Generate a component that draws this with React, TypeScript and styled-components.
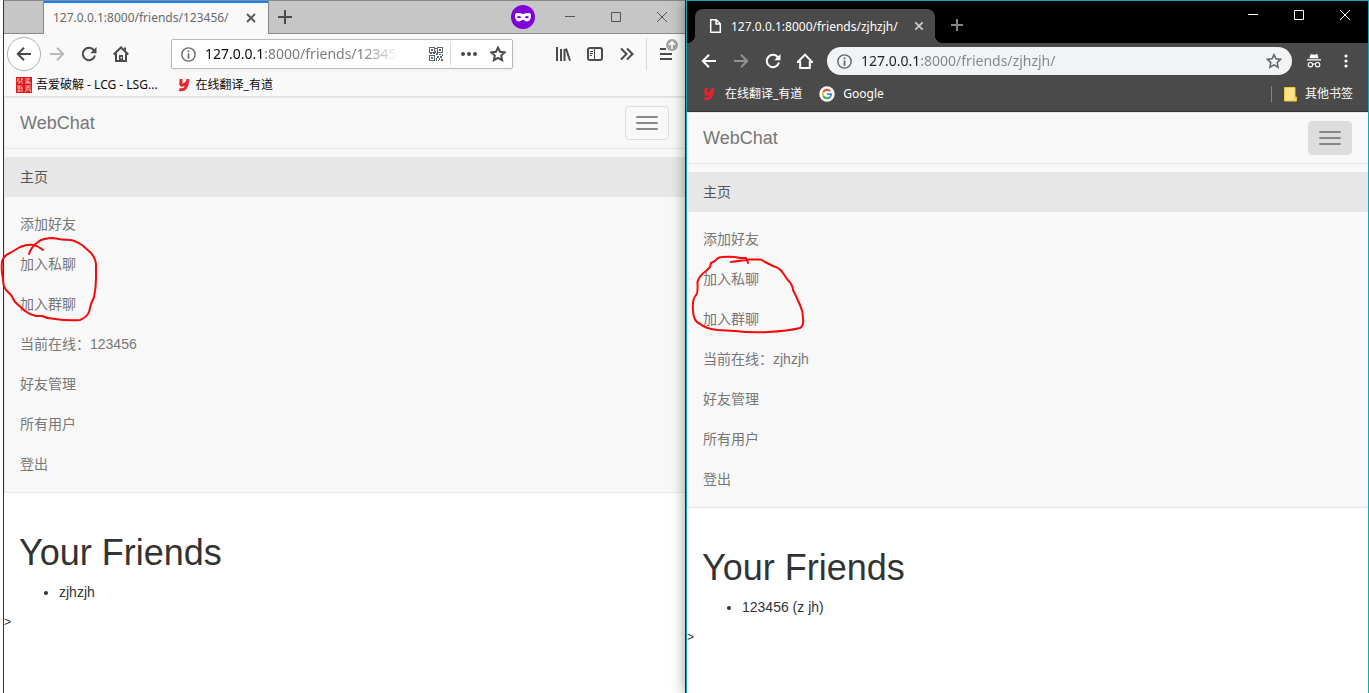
import React from 'react';
import styled, { createGlobalStyle, css } from 'styled-components';

const uiFont = '"Noto Sans", "Noto Sans CJK SC", sans-serif';
const pageFont = '"Liberation Sans", "Noto Sans CJK SC", sans-serif';

const GlobalStyle = createGlobalStyle`
  *, *::before, *::after { box-sizing: border-box; }
  body { margin: 0; background: #fff; font-family: ${pageFont}; }
  button { padding: 0; border: 0; background: none; font: inherit; color: inherit; cursor: pointer; }
  svg { display: block; flex: none; }
`;

const Desktop = styled.main`
  display: grid;
  grid-template-columns: minmax(0, 1fr) minmax(0, 1fr);
  min-height: 100vh;
  padding-left: 3px;
  overflow: hidden;
`;

const BrowserWindow = styled.section<{ $dark?: boolean }>`
  position: relative;
  display: flex;
  flex-direction: column;
  min-width: 0;
  background: #fff;
  ${({ $dark }) =>
    $dark
      ? css`
          border: 1px solid #17a2be;
          border-bottom: 0;
          z-index: 1;
          box-shadow: 0 0 14px rgba(0, 0, 0, 0.45);
        `
      : css`
          border: 1px solid #333;
          border-top-color: #888;
          border-bottom: 0;
        `}
`;

const TabStrip = styled.header<{ $dark?: boolean }>`
  display: flex;
  font-family: ${uiFont};
  ${({ $dark }) =>
    $dark
      ? css`
          height: 42px;
          padding: 8px 0 0 8px;
          background: #000;
        `
      : css`
          height: 33px;
          padding-left: 39px;
          background: #c6c6c6;
          border-bottom: 1px solid #8a8a8a;
        `}
`;

const Tab = styled.div<{ $dark?: boolean }>`
  display: flex;
  align-items: center;
  font-size: 12px;
  white-space: nowrap;
  ${({ $dark }) =>
    $dark
      ? css`
          position: relative;
          width: 240px;
          height: 34px;
          padding: 0 8px 0 12px;
          gap: 8px;
          color: #fff;
          background: #4a4a4a;
          border-radius: 8px 8px 0 0;
          &::before, &::after {
            content: '';
            position: absolute;
            bottom: 0;
            width: 8px;
            height: 8px;
          }
          &::before {
            left: -8px;
            background: radial-gradient(circle at 0 0, transparent 8px, #4a4a4a 8px);
          }
          &::after {
            right: -8px;
            background: radial-gradient(circle at 100% 0, transparent 8px, #4a4a4a 8px);
          }
        `
      : css`
          width: 226px;
          height: 33px;
          padding: 0 9px;
          color: #6a6a6a;
          background: #f9f9fa;
          border: solid #8a8a8a;
          border-width: 0 1px;
          box-shadow: inset 0 2px #0a84ff;
        `}
`;

const TabTitle = styled.span`
  flex: 1;
  min-width: 0;
  overflow: hidden;
`;

const IconButton = styled.button<{ $w: number; $h?: number; $round?: boolean }>`
  position: relative;
  display: flex;
  flex: none;
  align-items: center;
  justify-content: center;
  width: ${({ $w }) => $w}px;
  height: ${({ $h }) => $h ?? 32}px;
  ${({ $round }) =>
    $round &&
    css`
      && {
        background: #fff;
        border: 1px solid #b1b1b3;
      }
      border-radius: 50%;
    `}
`;

const WindowControls = styled.div`
  display: flex;
  flex: none;
  margin-left: auto;
`;

const ChromeControls = styled(WindowControls)`
  margin-top: -8px;
`;

const FirefoxMenu = styled.div`
  display: flex;
  margin-left: 3px;
  padding-left: 3px;
  border-left: 1px solid #d7d7db;
`;

const PrivateBadge = styled.span`
  align-self: center;
  margin-right: 12px;
`;

const Toolbar = styled.nav<{ $dark?: boolean }>`
  display: flex;
  align-items: center;
  font-family: ${uiFont};
  ${({ $dark }) =>
    $dark
      ? css`
          height: 36px;
          padding: 0 6px;
          background: #4a4a4a;
        `
      : css`
          height: 40px;
          padding: 0 3px;
          background: #f9f9fa;
        `}
`;

const AddressBar = styled.form<{ $dark?: boolean }>`
  display: flex;
  align-items: center;
  flex: 1;
  min-width: 0;
  gap: 7px;
  ${({ $dark }) =>
    $dark
      ? css`
          height: 28px;
          margin: 0 6px;
          padding: 0 6px 0 10px;
          background: #f1f3f4;
          border-radius: 14px;
        `
      : css`
          height: 30px;
          margin: 0 34px;
          padding: 0 3px 0 9px;
          background: #fff;
          border: 1px solid #b9b9bb;
          border-radius: 2px;
          box-shadow: 0 1px 3px rgba(0, 0, 0, 0.06);
        `}
`;

const AddressInput = styled.input<{ $shade: string }>`
  flex: 1;
  min-width: 0;
  height: 24px;
  padding: 0 0 2px 2px;
  border: 0;
  outline: 0;
  font-family: ${uiFont};
  font-size: 14px;
  color: transparent;
  background: ${({ $shade }) => $shade};
  background-clip: text;
  -webkit-background-clip: text;
`;

const Divider = styled.span<{ $h: number; $color: string }>`
  flex: none;
  width: 1px;
  height: ${({ $h }) => $h}px;
  background: ${({ $color }) => $color};
`;

const Bookmarks = styled.nav<{ $dark?: boolean }>`
  display: flex;
  align-items: center;
  font-family: ${uiFont};
  font-size: 12px;
  line-height: 16px;
  ${({ $dark }) =>
    $dark
      ? css`
          height: 33px;
          padding: 0 15px 2px 16px;
          gap: 17px;
          color: #fff;
          background: #4a4a4a;
          border-bottom: 1px solid #333;
        `
      : css`
          height: 23px;
          padding: 0 12px;
          gap: 20px;
          color: #0c0c0d;
          background: #f9f9fa;
          border-bottom: 1px solid #e0e0e1;
        `}
`;

const Bookmark = styled.a<{ $gap: number }>`
  display: flex;
  align-items: center;
  gap: ${({ $gap }) => $gap}px;
  color: inherit;
  text-decoration: none;
  white-space: nowrap;
`;

const BookmarkEnd = styled.div`
  display: flex;
  align-items: center;
  gap: 12px;
  margin-left: auto;
`;

const Navbar = styled.nav`
  background: #f8f8f8;
  border: 1px solid #e7e7e7;
  border-right: 0;
  font-size: 14px;
  line-height: 20px;
`;

const NavHeader = styled.div`
  display: flex;
  align-items: center;
  justify-content: space-between;
  height: 50px;
  padding: 0 16px 0 15px;
`;

const Brand = styled.a`
  font-size: 18px;
  color: #777;
  text-decoration: none;
`;

const Toggle = styled.button<{ $active?: boolean }>`
  display: flex;
  flex-direction: column;
  gap: 4px;
  && {
    padding: 9px 10px;
    border: 1px solid #ddd;
    background: ${({ $active }) => ($active ? '#ddd' : 'transparent')};
  }
  border-radius: 4px;
`;

const ToggleBar = styled.span`
  width: 22px;
  height: 2px;
  border-radius: 1px;
  background: #888;
`;

const Menu = styled.ul`
  position: relative;
  list-style: none;
  margin: 0;
  padding: 8px 0;
  border-top: 1px solid #e7e7e7;
`;

const MenuItem = styled.li<{ $active?: boolean }>`
  ${({ $active }) => $active && 'margin-bottom: 7px; background: #e7e7e7;'}
  a {
    display: block;
    padding: 10px 15px;
    color: ${({ $active }) => ($active ? '#555' : '#777')};
    text-decoration: none;
  }
`;

const Markup = styled.svg`
  position: absolute;
  left: 0;
  top: 0;
  overflow: visible;
  pointer-events: none;
  fill: none;
  stroke: #f80808;
  stroke-width: 2;
  stroke-linejoin: round;
  stroke-linecap: round;
`;

const Content = styled.article`
  padding: 20px 15px 0;
  margin-top: 20px;
  color: #333;
`;

const Title = styled.h1`
  margin: 0 0 9px;
  font-size: 36px;
  font-weight: normal;
  line-height: 40px;
`;

const FriendList = styled.ul`
  margin: 0 0 10px;
  padding-left: 40px;
  font-size: 14px;
  line-height: 20px;
`;

const Tail = styled.p`
  margin: 0;
  font-size: 12px;
  line-height: 20px;
  color: #333;
`;

type IconProps = { d: string; size?: number; color?: string; width?: number; fill?: string };

const Icon = ({ d, size = 16, color = '#4a4a4f', width = 2, fill = 'none' }: IconProps) => (
  <svg width={size} height={size} viewBox={`0 0 ${size} ${size}`} fill={fill} stroke={color} strokeWidth={width} aria-hidden="true">
    <path d={d} />
  </svg>
);

const backPath = 'M15 8H2M8 1.8L1.8 8L8 14.2';
const forwardPath = 'M1 8h13M8 1.8L14.2 8L8 14.2';
const starPath = 'M8 1.6l2 4.2 4.6.6-3.4 3.2.9 4.6L8 11.9l-4.1 2.3.9-4.6L1.4 6.4 6 5.8z';

const Reload = ({ color }: { color: string }) => (
  <svg width="16" height="16" viewBox="0 0 16 16" aria-hidden="true">
    <path d="M13.2 4.6A6.2 6.2 0 1 0 14 9.6" fill="none" stroke={color} strokeWidth="2" />
    <path d="M15.5 1v6.2H9.3z" fill={color} />
  </svg>
);

const Info = ({ size, color }: { size: number; color: string }) => (
  <svg width={size} height={size} viewBox="0 0 14 14" aria-hidden="true">
    <circle cx="7" cy="7" r="6.2" fill="none" stroke={color} strokeWidth="1.3" />
    <path d="M6.2 3.2h1.6v1.6H6.2zM6.2 6h1.6v5H6.2z" fill={color} />
  </svg>
);

const Youdao = () => (
  <svg width="12" height="14" viewBox="0 0 12 14" aria-hidden="true">
    <path d="M3.2 1L2.700 5.500q-.1 1.900 1.800 1.600Q7.400 6.700 8.600 4M10 1L9.200 5.500Q8.200 10 6 11.200Q4.500 12 1.200 11.800" fill="none" stroke="#e8232a" strokeWidth="3" />
  </svg>
);

const QrCode = () => (
  <svg width="14" height="14" viewBox="0 0 14 14" fill="#5c6670" aria-hidden="true">
    <path
      fillRule="evenodd"
      d="M0 0h6v6H0zM1 1v4h4V1zM8 0h6v6H8zM9 1v4h4V1zM0 8h6v6H0zM1 9v4h4V9zM2 2h2v2H2zM10 2h2v2h-2zM2 10h2v2H2zM6 1h2v1H6zM6 4h1v2H6zM7 6h2v2H7zM1 6h2v1H1zM4 6h2v1H4zM10 7h2v1h-2zM13 7h1v2h-1zM8 9h2v2H8zM11 9h2v2h-2zM7 11h1v3H7zM10 11h1v2h-1zM9 13h1v1H9zM12 12h2v2h-2z"
    />
  </svg>
);

const SealIcon = () => (
  <svg width="16" height="16" viewBox="0 0 16 16" aria-hidden="true">
    <path d="M0 0h16v16H0z" fill="#e0161c" />
    <path
      d="M1 2h3M2 2L1 5M2 4h2v2H2M5 2h2M6 1v3M5 4l2 3M9 2h5M10 3v2h4M9 6h6M12 1v5M1 9h5M3 9v6M1 11h5M1 14h6M6 10v3M9 9h6M9 11h6M12 9v2M10 13h4M9 15l2-3M14 12l1 3"
      fill="none"
      stroke="#ffd0ce"
      strokeWidth="0.8"
    />
  </svg>
);

const GoogleIcon = () => (
  <svg width="16" height="16" viewBox="0 0 16 16" aria-hidden="true">
    <circle cx="8" cy="8" r="7.700" fill="#fff" />
    <g fill="none" strokeWidth="1.900">
      <path d="M11.100 5A4.200 4.200 0 0 0 4.300 6.100" stroke="#ea4335" />
      <path d="M4.300 6.100a4.200 4.200 0 0 0 0 3.900" stroke="#fbbc05" />
      <path d="M4.300 10a4.200 4.200 0 0 0 6.600 1.200" stroke="#34a853" />
      <path d="M10.800 11.200A4.200 4.200 0 0 0 12.200 8.100H8" stroke="#4285f4" />
    </g>
  </svg>
);

const FolderIcon = () => (
  <svg width="13" height="15" viewBox="0 0 13 15" aria-hidden="true">
    <path d="M.5.5h10.500v9.500h1.500v4H.500z" fill="#ffe48f" stroke="#f0c63c" />
    <path d="M10.500 10v4" stroke="#f0c63c" />
  </svg>
);

const MaskIcon = () => (
  <svg width="24" height="24" viewBox="0 0 24 24" role="img" aria-label="Private browsing">
    <circle cx="12" cy="12" r="12" fill="#8000d7" />
    <path
      fillRule="evenodd"
      fill="#fff"
      d="M4 9.500C4.500 7.600 8.500 7.600 12 9c3.500-1.400 7.500-1.400 8 .5.300 4-1.300 7-3.900 7-2 0-2.700-1.800-4.100-1.800S9.900 16.500 7.900 16.500C5.300 16.500 3.700 13.500 4 9.500zM6 12c.9 1.700 3.400 1.700 4.300.2-1.200-1.500-3.200-1.600-4.300-.2zM13.700 12.200c.9 1.500 3.400 1.500 4.300-.2-1.100-1.400-3.100-1.300-4.300.2z"
    />
  </svg>
);

const IncognitoIcon = () => (
  <svg width="14" height="14" viewBox="0 0 14 14" aria-hidden="true">
    <path d="M3.600 0L7 .8 10.400 0l1.200 4.200H2.400zM0 5.200h14v1.200H0z" fill="#fff" />
    <g fill="none" stroke="#fff" strokeWidth="1.100">
      <circle cx="3.400" cy="10.700" r="2.200" />
      <circle cx="10.600" cy="10.700" r="2.200" />
      <path d="M5.500 10.300q1.500-.8 3 0" />
    </g>
  </svg>
);

const MenuUpdateIcon = () => (
  <svg width="24" height="32" viewBox="0 0 24 32" aria-hidden="true">
    <path d="M6 11h6M6 16h12M6 21h12" stroke="#4a4a4f" strokeWidth="2" />
    <circle cx="18" cy="7" r="6" fill="#a3a3a3" />
    <path d="M18 11V4M15 7l3-3 3 3" fill="none" stroke="#fff" strokeWidth="1.600" />
  </svg>
);

const Controls = ({ color, height }: { color: string; height: number }) => (
  <>
    <IconButton $w={46} $h={height} aria-label="Minimize"><Icon size={12} color={color} width={1} d="M1 5.500h10" /></IconButton>
    <IconButton $w={46} $h={height} aria-label="Maximize"><Icon size={12} color={color} width={1} d="M1.500 1.500h9v9h-9z" /></IconButton>
    <IconButton $w={46} $h={height} aria-label="Close window"><Icon size={12} color={color} width={1} d="M1 1l10 10M11 1L1 11" /></IconButton>
  </>
);

type SiteProps = { user: string; friend: string; expanded?: boolean; markup: string; shift: string };

const Site = ({ user, friend, expanded, markup, shift }: SiteProps) => (
  <>
    <Navbar>
      <NavHeader>
        <Brand href="#">WebChat</Brand>
        <Toggle $active={expanded} aria-label="Toggle navigation">
          <ToggleBar /><ToggleBar /><ToggleBar />
        </Toggle>
      </NavHeader>
      <Menu>
        <MenuItem $active><a href="#">主页</a></MenuItem>
        {['添加好友', '加入私聊', '加入群聊', `当前在线：${user}`, '好友管理', '所有用户', '登出'].map((label) => (
          <MenuItem key={label}><a href="#">{label}</a></MenuItem>
        ))}
        <Markup as="svg" width="120" height="180" aria-hidden="true">
          <path transform={shift} d={markup} />
        </Markup>
      </Menu>
    </Navbar>
    <Content>
      <Title>Your Friends</Title>
      <FriendList><li>{friend}</li></FriendList>
    </Content>
    <Tail>&gt;</Tail>
  </>
);

const leftMarkup =
  'M43 250L37 246Q30 243 20 247L10 253Q3 256 2 262Q1 270 3 279Q3 286 6 290L11 295L15 302L25 311Q30 315 36 316L42 316Q48 319 55 319Q68 321 80 320Q87 317 89 312L91 304L94 297Q96 288 96 278L96 266Q96 258 90 252L82 245Q74 240 70 240Q62 240 53 238Q43 238 38 242Q31 247 29 254';
const rightMarkup =
  'M731 262L738 261L750 259.500H761L765 262L773 266Q780 268 783 273L787 279Q793 285 793 290L796 296L800 305Q803 311 803 318Q804 326 800 328Q788 331 768 332Q750 333 735 331L718 330Q706 329 700 324Q693 321 693 310Q692 300 696 295Q698 294 697.500 282Q699 276 706 271L710 267L711 263L715 261Q718 257 722 257Q733 256 740 258H746L748 263';

const hold = (e: React.FormEvent) => e.preventDefault();

const Firefox = () => (
  <BrowserWindow aria-label="Firefox">
    <TabStrip>
      <Tab>
        <TabTitle>127.0.0.1:8000/friends/123456/</TabTitle>
        <IconButton $w={16} aria-label="Close tab"><Icon size={10} width={2} color="#5c5c5c" d="M1 1l8 8M9 1L1 9" /></IconButton>
      </Tab>
      <IconButton $w={32} aria-label="New tab"><Icon size={14} d="M7 0v14M0 7h14" /></IconButton>
      <WindowControls>
        <PrivateBadge><MaskIcon /></PrivateBadge>
        <Controls color="#555" height={32} />
      </WindowControls>
    </TabStrip>
    <Toolbar>
      <IconButton $w={34} $h={34} $round aria-label="Back"><Icon d={backPath} /></IconButton>
      <IconButton $w={32} aria-label="Forward"><Icon color="#b9b9bb" d={forwardPath} /></IconButton>
      <IconButton $w={32} aria-label="Reload"><Reload color="#4a4a4f" /></IconButton>
      <IconButton $w={32} aria-label="Home">
        <svg width="16" height="16" viewBox="0 0 16 16" aria-hidden="true">
          <path d="M.700 8.500L8 1.500l7.300 7M3 7.500V15h10V7.500" fill="none" stroke="#4a4a4f" strokeWidth="2" />
          <path d="M6 9h4v6H6zM11 1.500h2V5l-2-2z" fill="#4a4a4f" />
          <path d="M7.500 11h1.500v1.500H7.500z" fill="#f9f9fa" />
        </svg>
      </IconButton>
      <AddressBar onSubmit={hold}>
        <Info size={15} color="#6a6a6e" />
        <AddressInput
          aria-label="Address"
          defaultValue="127.0.0.1:8000/friends/123456/"
          $shade="linear-gradient(to right, #0c0c0d 62px, #77777b 62px, #77777b 160px, transparent 196px)"
        />
        <QrCode />
        <Divider $h={22} $color="#d7d7db" />
        <IconButton $w={22} $h={28} aria-label="Page actions">
          <Icon color="none" fill="#4a4a4f" d="M0 8a2 2 0 1 0 4 0a2 2 0 1 0-4 0M6 8a2 2 0 1 0 4 0a2 2 0 1 0-4 0M12 8a2 2 0 1 0 4 0a2 2 0 1 0-4 0" />
        </IconButton>
        <IconButton $w={22} $h={28} aria-label="Bookmark this page"><Icon d={starPath} /></IconButton>
      </AddressBar>
      <IconButton $w={32} aria-label="Library"><Icon d="M2 1v14M6 3v12M9.500 3v12M11 2.500l4 12.300" /></IconButton>
      <IconButton $w={32} aria-label="Sidebars">
        <svg width="16" height="14" viewBox="0 0 16 14" fill="none" stroke="#4a4a4f" aria-hidden="true">
          <rect x="1" y="1" width="14" height="12" rx="2" strokeWidth="2" />
          <path d="M7.500 1v12M3 4.500h3M3 6.500h3M3 8.500h2" />
        </svg>
      </IconButton>
      <IconButton $w={32} aria-label="More tools"><Icon d="M2 2.500l5.500 5.500L2 13.500M8 2.500l5.500 5.500L8 13.500" /></IconButton>
      <FirefoxMenu>
        <IconButton $w={32} aria-label="Open menu"><MenuUpdateIcon /></IconButton>
      </FirefoxMenu>
    </Toolbar>
    <Bookmarks>
      <Bookmark href="#" $gap={4}><SealIcon />吾爱破解 - LCG - LSG...</Bookmark>
      <Bookmark href="#" $gap={6}><Youdao />在线翻译_有道</Bookmark>
    </Bookmarks>
    <Site user="123456" friend="zjhzjh" markup={leftMarkup} shift="translate(-5 -149)" />
  </BrowserWindow>
);

const Chrome = () => (
  <BrowserWindow $dark aria-label="Chrome">
    <TabStrip $dark>
      <Tab $dark>
        <Icon size={16} color="#fff" width={1.5} d="M3.700 1.700h5.600l4 4v8.600H3.700zM9 1.700V6h4.300" />
        <TabTitle>127.0.0.1:8000/friends/zjhzjh/</TabTitle>
        <IconButton $w={16} aria-label="Close tab"><Icon size={8} color="#d0d0d0" width={1.6} d="M0 0l8 8M8 0L0 8" /></IconButton>
      </Tab>
      <IconButton $w={44} aria-label="New tab"><Icon size={12} color="#858585" d="M6 0v12M0 6h12" /></IconButton>
      <ChromeControls><Controls color="#fff" height={28} /></ChromeControls>
    </TabStrip>
    <Toolbar $dark>
      <IconButton $w={32} aria-label="Back"><Icon color="#fff" d={backPath} /></IconButton>
      <IconButton $w={32} aria-label="Forward"><Icon color="#929292" d={forwardPath} /></IconButton>
      <IconButton $w={32} aria-label="Reload"><Reload color="#fff" /></IconButton>
      <IconButton $w={32} aria-label="Home"><Icon color="#fff" d="M.800 9L8 1.600 15.200 9H12.800v6H3.200V9z" /></IconButton>
      <AddressBar $dark onSubmit={hold}>
        <Info size={15} color="#5f6368" />
        <AddressInput
          aria-label="Address"
          defaultValue="127.0.0.1:8000/friends/zjhzjh/"
          $shade="linear-gradient(to right, #202124 62px, #80868b 62px)"
        />
        <IconButton $w={24} $h={28} aria-label="Bookmark this page"><Icon color="#5f6368" width={1.5} d={starPath} /></IconButton>
      </AddressBar>
      <IconButton $w={32} aria-label="Incognito"><IncognitoIcon /></IconButton>
      <IconButton $w={32} aria-label="Menu">
        <Icon color="none" fill="#fff" d="M6.400 3a1.600 1.600 0 1 0 3.200 0a1.600 1.600 0 1 0-3.200 0M6.400 8a1.600 1.600 0 1 0 3.200 0a1.600 1.600 0 1 0-3.200 0M6.400 13a1.600 1.600 0 1 0 3.200 0a1.600 1.600 0 1 0-3.200 0" />
      </IconButton>
    </Toolbar>
    <Bookmarks $dark>
      <Bookmark href="#" $gap={10}><Youdao />在线翻译_有道</Bookmark>
      <Bookmark href="#" $gap={8}><GoogleIcon />Google</Bookmark>
      <BookmarkEnd>
        <Divider $h={16} $color="#868686" />
        <Bookmark href="#" $gap={8}><FolderIcon />其他书签</Bookmark>
      </BookmarkEnd>
    </Bookmarks>
    <Site user="zjhzjh" friend="123456 (z jh)" expanded markup={rightMarkup} shift="translate(-688 -164)" />
  </BrowserWindow>
);

export default function App() {
  return (
    <>
      <GlobalStyle />
      <Desktop>
        <Firefox />
        <Chrome />
      </Desktop>
    </>
  );
}
